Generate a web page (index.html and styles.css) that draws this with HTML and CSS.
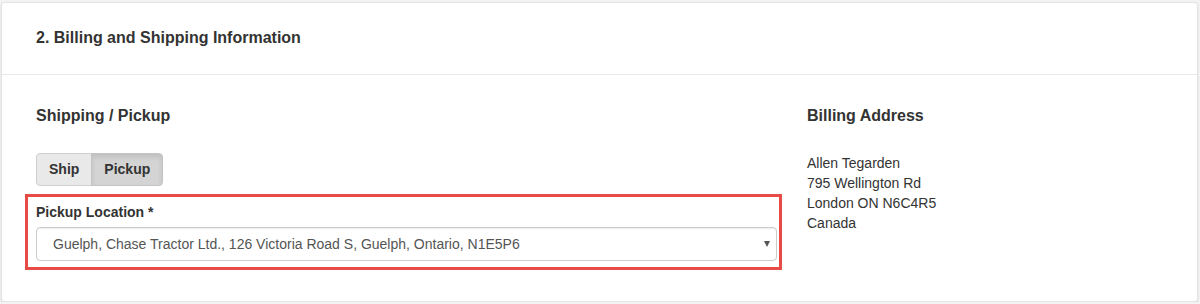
FILE: index.html
```html
<!DOCTYPE html>
<html lang="en">
<head>
  <meta charset="UTF-8" />
  <meta name="viewport" content="width=device-width, initial-scale=1.0"/>
  <title>Billing and Shipping</title>
  <link rel="stylesheet" href="styles.css">
</head>
<body>
  <div class="panel">
    <!-- Tiêu đề bước -->
    <div class="panel-heading">2. Billing and Shipping Information</div>

    <div class="panel-body">
      <!-- Cột trái: giao hàng / nhận hàng -->
      <div class="col-left">
        <h4>Shipping / Pickup</h4>

        <div class="btn-group">
          <button class="btn">Ship</button>
          <button class="btn active">Pickup</button>
        </div>

        <div class="pickup-field">
          <label for="pickup-location">Pickup Location *</label>
          <div class="select-wrap">
            <select id="pickup-location">
              <option>Guelph, Chase Tractor Ltd., 126 Victoria Road S, Guelph, Ontario, N1E5P6</option>
            </select>
          </div>
        </div>
      </div>

      <!-- Cột phải: địa chỉ thanh toán -->
      <div class="col-right">
        <h4>Billing Address</h4>
        <address>
          Allen Tegarden<br>
          795 Wellington Rd<br>
          London ON N6C4R5<br>
          Canada
        </address>
      </div>
    </div>
  </div>
</body>
</html>
```

FILE: styles.css
```css
body {
  margin: 0;
  padding: 2px 2px 0 1px;
  background: #f3f3f3;
  font-family: "Liberation Sans", Arial, sans-serif;
  font-size: 14px;
  color: #333;
}

.panel {
  height: 298px;
  background: #fff;
  border: 1px solid #e4e4e4;
  border-radius: 3px;
  box-shadow: 0 1px 2px rgba(0,0,0,0.12);
}

.panel-heading {
  padding: 24px 34px 26px;
  font-size: 16px;
  font-weight: bold;
  line-height: 21px;
  border-bottom: 1px solid #e8e8e8;
}

.panel-body {
  display: grid;
  grid-template-columns: 741px 1fr;
  gap: 30px;
  padding: 30px 34px 0;
}

h4 {
  margin: 0 0 26px;
  font-size: 16px;
  line-height: 22px;
}

.btn-group {
  display: flex;
}

.btn {
  padding: 6px 12px;
  font-family: inherit;
  font-size: 14px;
  font-weight: bold;
  line-height: 19px;
  color: #333;
  background: #e9e9e9;
  border: 1px solid #cfcfcf;
  border-radius: 4px 0 0 4px;
  cursor: pointer;
}

.btn.active {
  margin-left: -1px;
  background: #d4d4d4;
  border-color: #c4c4c4;
  border-radius: 0 4px 4px 0;
  box-shadow: inset 0 3px 5px rgba(0,0,0,0.1);
}

.pickup-field {
  margin: 8px -5px 0 -11px;
  padding: 5px 2px 6px 8px;
  border: 3px solid #e84a45;
}

.pickup-field label {
  display: block;
  margin-bottom: 5px;
  font-weight: bold;
  line-height: 20px;
}

.select-wrap {
  position: relative;
}

.select-wrap::after {
  content: "";
  position: absolute;
  right: 7px;
  top: 14px;
  border-left: 3.5px solid transparent;
  border-right: 3.5px solid transparent;
  border-top: 6px solid #555;
  pointer-events: none;
}

.select-wrap select {
  display: block;
  width: 100%;
  height: 34px;
  padding: 6px 16px;
  font-family: inherit;
  font-size: 14px;
  color: #555;
  background: #fff;
  border: 1px solid #ccc;
  border-radius: 4px;
  box-shadow: inset 0 1px 1px rgba(0,0,0,0.075);
  -webkit-appearance: none;
  appearance: none;
}

address {
  font-style: normal;
  line-height: 20px;
  margin-top: 26px;
}

.col-right h4 {
  margin-bottom: 0;
}
```
